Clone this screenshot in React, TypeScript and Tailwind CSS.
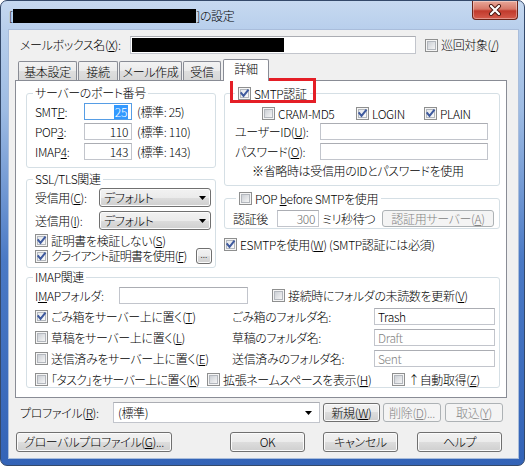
import React from "react";

function Check({ checked = false }: { checked?: boolean }) {
  return (
    <svg width="13" height="13" viewBox="0 0 13 13" className="block shrink-0">
      <defs>
        <linearGradient id="cbU" x1="0" y1="0" x2="1" y2="1">
          <stop offset="0" stopColor="#c9cdd3" />
          <stop offset="1" stopColor="#f7f7f7" />
        </linearGradient>
        <linearGradient id="cbC" x1="0" y1="0" x2="1" y2="1">
          <stop offset="0" stopColor="#e3e6ea" />
          <stop offset="1" stopColor="#fbfbfb" />
        </linearGradient>
      </defs>
      <rect x="0.5" y="0.5" width="12" height="12" fill="#f5f5f5" stroke="#8e8f8f" />
      <rect x="2.5" y="2.5" width="8" height="8" fill={checked ? "url(#cbC)" : "url(#cbU)"} stroke="#b3b7bd" />
      {checked && (
        <path d="M3.3 6.2 L5.5 8.9 L9.9 3.3" fill="none" stroke="#3f5a9e" strokeWidth="2" strokeLinecap="square" />
      )}
    </svg>
  );
}

function CB({ checked, children, className = "" }: { checked?: boolean; children: React.ReactNode; className?: string }) {
  return (
    <div className={`flex items-center shrink-0 ${className}`}>
      <Check checked={checked} />
      <span className="ml-[3px]">{children}</span>
    </div>
  );
}

function Btn({ children, className = "", disabled = false }: { children: React.ReactNode; className?: string; disabled?: boolean }) {
  return (
    <div
      className={`flex shrink-0 items-center justify-center rounded-[3px] border ${
        disabled
          ? "border-[#adb2b5] bg-[#f4f4f4] text-[#838383]"
          : "border-[#707070] bg-[linear-gradient(#f2f2f2_0%,#ebebeb_50%,#dddddd_50%,#cfcfcf_100%)] shadow-[inset_0_0_0_1px_#fbfbfb] text-black"
      } ${className}`}
    >
      {children}
    </div>
  );
}

function Field({ children, className = "" }: { children?: React.ReactNode; className?: string }) {
  return (
    <div className={`flex shrink-0 items-center border border-[#c2c5cc] border-t-[#abadb3] bg-white ${className}`}>{children}</div>
  );
}

function DropBtn() {
  return (
    <div className="flex h-[19px] w-[112px] shrink-0 items-center rounded-[3px] border border-[#707070] bg-[linear-gradient(#f2f2f2_0%,#ebebeb_50%,#dddddd_50%,#cfcfcf_100%)] pl-[4px] pr-[4px] shadow-[inset_0_0_0_1px_#fbfbfb]">
      <span>デフォルト</span>
      <svg className="ml-auto" width="7" height="4" viewBox="0 0 7 4">
        <path d="M0 0H7L3.5 4Z" fill="#000" />
      </svg>
    </div>
  );
}

function Tab({ children, className = "" }: { children: React.ReactNode; className?: string }) {
  return (
    <div
      className={`mr-[1px] flex h-[20px] shrink-0 items-start justify-center rounded-t-[2px] border border-b-0 border-[#898c95] bg-[linear-gradient(#f3f3f3_0%,#ebebeb_50%,#dedede_50%,#d6d6d6_100%)] pt-[3px] ${className}`}
    >
      {children}
    </div>
  );
}

export default function App() {
  return (
    <div className="h-[466px] w-[525px] overflow-hidden bg-white">
      <div className="flex h-[466px] w-[525px] flex-col whitespace-nowrap rounded-[7px] border border-[#34496a] bg-[linear-gradient(180deg,#c6d9f0_0px,#b8cfec_28px,#9dbbe3_110px,#4a79c5_260px,#3363b7_466px)] font-['Noto_Sans_CJK_JP',sans-serif] text-[12px] font-light leading-[14px] tracking-[-0.35px] text-black [font-feature-settings:'palt']">
        {/* title bar */}
        <div className="flex h-[28px] shrink-0">
          <div className="ml-[8px] mt-[8px] flex h-[14px] items-center">
            <span>[</span>
            <div className="ml-[1px] h-[14px] w-[183px] bg-black" />
            <span>]の設定</span>
          </div>
          <div className="ml-auto mr-[6px] flex h-[19px] w-[46px] items-center justify-center rounded-b-[4px] border border-t-0 border-[#6b2419] bg-[linear-gradient(180deg,#e9a899_0%,#d77868_45%,#c13a2c_55%,#d55b4c_100%)] shadow-[inset_0_0_0_1px_rgba(255,255,255,0.35)]">
            <svg width="14" height="12" viewBox="0 0 14 12">
              <path d="M3 2 L11 10 M11 2 L3 10" stroke="#4a1710" strokeWidth="4" strokeLinecap="round" />
              <path d="M3 2 L11 10 M11 2 L3 10" stroke="#ffffff" strokeWidth="2.2" strokeLinecap="round" />
            </svg>
          </div>
        </div>

        {/* client */}
        <div className="mb-[6px] ml-[7px] mr-[5px] flex flex-1 flex-col border border-[#a9bddb] bg-[#f0f0f0] pl-[6px] pt-[6px]">
          {/* mailbox row */}
          <div className="flex h-[18px] items-center">
            <div className="ml-[5px] w-[110px] shrink-0">
              メールボックス名(<u>X</u>):
            </div>
            <Field className="h-[18px] w-[286px]">
              <div className="ml-[1px] h-[14px] w-[152px] bg-black" />
            </Field>
            <CB className="ml-[9px]">
              巡回対象(<u>/</u>)
            </CB>
          </div>

          {/* tabs */}
          <div className="-mb-px mt-[5px] flex h-[22px] items-end pl-[3px]">
            <Tab className="w-[59px]">基本設定</Tab>
            <Tab className="w-[40px]">接続</Tab>
            <Tab className="w-[63px]">メール作成</Tab>
            <Tab className="w-[38px]">受信</Tab>
            <div className="relative z-10 ml-[1px] flex h-[22px] w-[46px] items-start justify-center rounded-t-[2px] border border-b-0 border-[#898c95] bg-white pt-[2px]">
              詳細
            </div>
          </div>

          {/* panel */}
          <div className="h-[318px] w-[492px] border border-[#898c95] bg-white pl-[10px] pt-[12px]">
            <div className="flex gap-[8px]">
              {/* left column */}
              <div className="flex w-[190px] flex-col">
                <div className="h-[75px] rounded-[3px] border border-[#d5dfe5]">
                  <div className="-mt-[7px] ml-[6px] h-[12px] w-fit bg-white px-[2px] leading-[12px]">サーバーのポート番号</div>
                  <div className="mt-[4px] flex flex-col gap-[3px] pl-[8px]">
                    <div className="flex h-[17px] items-center">
                      <div className="w-[49px] shrink-0">
                        SMT<u>P</u>:
                      </div>
                      <div className="flex h-[17px] w-[48px] shrink-0 items-center justify-end border border-[#569de5] bg-white pr-[3px]">
                        <span className="bg-[#3399ff] px-[1px] text-white">25</span>
                      </div>
                      <span className="ml-[5px]">(標準: 25)</span>
                    </div>
                    <div className="flex h-[17px] items-center">
                      <div className="w-[49px] shrink-0">
                        POP<u>3</u>:
                      </div>
                      <Field className="h-[17px] w-[48px] justify-end pr-[3px]">110</Field>
                      <span className="ml-[5px]">(標準: 110)</span>
                    </div>
                    <div className="flex h-[17px] items-center">
                      <div className="w-[49px] shrink-0">
                        IMAP<u>4</u>:
                      </div>
                      <Field className="h-[17px] w-[48px] justify-end pr-[3px]">143</Field>
                      <span className="ml-[5px]">(標準: 143)</span>
                    </div>
                  </div>
                </div>

                <div className="mt-[11px] h-[89px] rounded-[3px] border border-[#d5dfe5]">
                  <div className="-mt-[7px] ml-[6px] h-[12px] w-fit bg-white px-[2px] leading-[12px]">SSL/TLS関連</div>
                  <div className="pl-[8px]">
                    <div className="mt-[3px] flex h-[19px] items-center">
                      <div className="w-[64px] shrink-0">
                        受信用(<u>C</u>):
                      </div>
                      <DropBtn />
                    </div>
                    <div className="mt-[4px] flex h-[19px] items-center">
                      <div className="w-[64px] shrink-0">
                        送信用(<u>I</u>):
                      </div>
                      <DropBtn />
                    </div>
                    <div className="mt-[4px] flex h-[13px] items-center">
                      <CB checked>
                        証明書を検証しない(<u>S</u>)
                      </CB>
                    </div>
                    <div className="mt-[1px] flex h-[16px] items-center">
                      <CB checked className="tracking-[-0.8px]">
                        クライアント証明書を使用(<u>F</u>)
                      </CB>
                      <Btn className="ml-auto mr-[3px] h-[16px] w-[16px]">
                        <span className="-mt-[4px] text-[9px] leading-[9px] tracking-normal">...</span>
                      </Btn>
                    </div>
                  </div>
                </div>
              </div>

              {/* right column */}
              <div className="flex w-[276px] flex-col">
                <div className="relative h-[93px] rounded-[3px] border border-[#d5dfe5]">
                  <div className="-mt-[7px] ml-[10px] flex h-[13px] w-fit items-center bg-white px-[3px]">
                    <CB checked>SMTP認証</CB>
                  </div>
                  <div className="absolute -top-[16px] left-[5px] h-[25px] w-[86px] border-[3px] border-[#e41e26]" />
                  <div className="mt-[7px] flex h-[13px] items-center pl-[37px]">
                    <CB className="w-[94px]">CRAM-MD5</CB>
                    <CB checked className="w-[68px]">
                      LOGIN
                    </CB>
                    <CB checked>PLAIN</CB>
                  </div>
                  <div className="mt-[3px] flex h-[17px] items-center pl-[10px]">
                    <div className="w-[85px] shrink-0">
                      ユーザーID(<u>U</u>):
                    </div>
                    <Field className="h-[17px] w-[168px]" />
                  </div>
                  <div className="mt-[3px] flex h-[17px] items-center pl-[10px]">
                    <div className="w-[85px] shrink-0">
                      パスワード(<u>O</u>):
                    </div>
                    <Field className="h-[17px] w-[168px]" />
                  </div>
                  <div className="mt-[4px] flex h-[14px] items-center pl-[27px]">※省略時は受信用のIDとパスワードを使用</div>
                </div>

                <div className="mt-[12px] h-[31px] rounded-[3px] border border-[#d5dfe5]">
                  <div className="-mt-[7px] ml-[11px] flex h-[13px] w-fit items-center bg-white px-[3px]">
                    <CB>
                      POP <u>b</u>efore SMTPを使用
                    </CB>
                  </div>
                  <div className="mt-[5px] flex h-[17px] items-center pl-[8px]">
                    <div className="w-[44px] shrink-0">認証後</div>
                    <Field className="h-[17px] w-[42px] justify-end pr-[3px] text-[#6d6d6d]">300</Field>
                    <span className="ml-[3px]">ミリ秒待つ</span>
                    <Btn disabled className="ml-auto mr-[5px] h-[17px] w-[112px]">
                      認証用サーバー(<u>A</u>)
                    </Btn>
                  </div>
                </div>

                <div className="mt-[9px] flex h-[13px] items-center">
                  <CB checked>
                    ESMTPを使用(<u>W</u>) (SMTP認証には必須)
                  </CB>
                </div>
              </div>
            </div>

            {/* IMAP group */}
            <div className="mt-[9px] h-[111px] w-[474px] rounded-[3px] border border-[#d5dfe5]">
              <div className="-mt-[7px] ml-[6px] h-[12px] w-fit bg-white px-[2px] leading-[12px]">IMAP関連</div>
              <div className="pl-[8px]">
                <div className="mt-[4px] flex h-[17px] items-center">
                  <div className="w-[84px] shrink-0">
                    I<u>M</u>APフォルダ:
                  </div>
                  <Field className="h-[17px] w-[129px]" />
                  <CB className="ml-[24px]">
                    接続時にフォルダの未読数を更新(<u>V</u>)
                  </CB>
                </div>
                <div className="mt-[4px] flex h-[17px] items-center">
                  <CB checked className="w-[197px]">
                    ごみ箱をサーバー上に置く(<u>T</u>)
                  </CB>
                  <div className="w-[142px] shrink-0">ごみ箱のフォルダ名:</div>
                  <Field className="h-[17px] w-[121px] pl-[3px]">Trash</Field>
                </div>
                <div className="mt-[4px] flex h-[17px] items-center">
                  <CB className="w-[197px]">
                    草稿をサーバー上に置く(<u>L</u>)
                  </CB>
                  <div className="w-[142px] shrink-0">草稿のフォルダ名:</div>
                  <Field className="h-[17px] w-[121px] pl-[3px] text-[#838383]">Draft</Field>
                </div>
                <div className="mt-[4px] flex h-[17px] items-center">
                  <CB className="w-[197px]">
                    送信済みをサーバー上に置く(<u>E</u>)
                  </CB>
                  <div className="w-[142px] shrink-0">送信済みのフォルダ名:</div>
                  <Field className="h-[17px] w-[121px] pl-[3px] text-[#838383]">Sent</Field>
                </div>
                <div className="mt-[6px] flex h-[13px] items-center">
                  <CB className="w-[172px] tracking-[-0.7px]">
                    「タスク」をサーバー上に置く(<u>K</u>)
                  </CB>
                  <CB className="w-[185px]">
                    拡張ネームスペースを表示(<u>H</u>)
                  </CB>
                  <CB>
                    ↑自動取得(<u>Z</u>)
                  </CB>
                </div>
              </div>
            </div>
          </div>

          {/* profile row */}
          <div className="mt-[4px] flex h-[21px] items-center">
            <div className="ml-[5px] w-[93px] shrink-0">
              プロファイル(<u>R</u>):
            </div>
            <Field className="h-[21px] w-[207px] pl-[4px] pr-[7px]">
              <span>(標準)</span>
              <svg className="ml-auto" width="7" height="4" viewBox="0 0 7 4">
                <path d="M0 0H7L3.5 4Z" fill="#000" />
              </svg>
            </Field>
            <Btn className="ml-[3px] h-[19px] w-[57px] border-[#3a3a3a]">
              新規(<u>W</u>)
            </Btn>
            <Btn disabled className="ml-[3px] h-[19px] w-[58px]">
              削除(<u>D</u>)...
            </Btn>
            <Btn disabled className="ml-[4px] h-[19px] w-[58px]">
              取込(<u>Y</u>)
            </Btn>
          </div>

          {/* bottom buttons */}
          <div className="mt-[9px] flex h-[20px] items-center">
            <Btn className="ml-[1px] h-[20px] w-[156px]">
              グローバルプロファイル(<u>G</u>)...
            </Btn>
            <Btn className="ml-[58px] h-[20px] w-[75px]">OK</Btn>
            <Btn className="ml-[18px] h-[20px] w-[75px]">キャンセル</Btn>
            <Btn className="ml-[19px] h-[20px] w-[85px]">ヘルプ</Btn>
          </div>
        </div>
      </div>
    </div>
  );
}
